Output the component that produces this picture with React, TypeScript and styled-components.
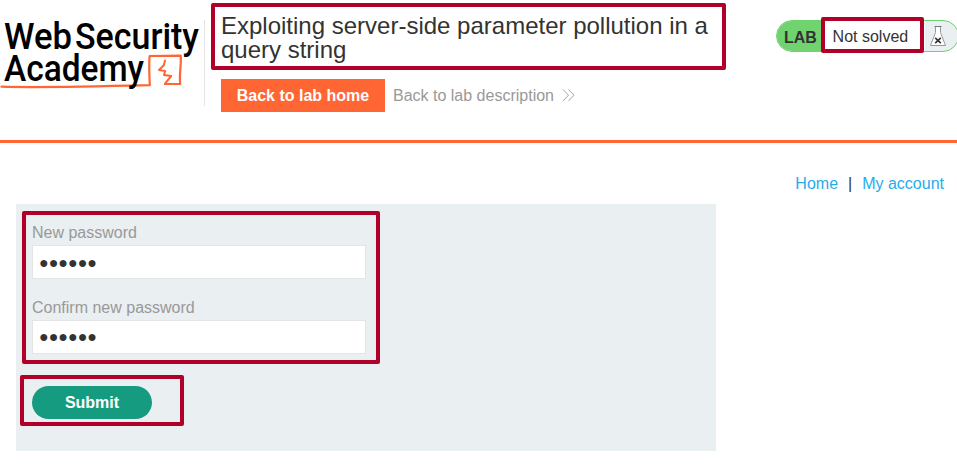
import React from "react";
import styled, { createGlobalStyle } from "styled-components";

const GlobalStyle = createGlobalStyle`
  * { box-sizing: border-box; }
  html, body { margin: 0; padding: 0; background: #fff; overflow: hidden; }
  body { font-family: "Liberation Sans", Arial, sans-serif; font-size: 16px; color: #333332; }
`;

const Page = styled.div`
  width: 957px;
  height: 465px;
  overflow: hidden;
`;

const Header = styled.header`
  display: flex;
  align-items: flex-start;
  height: 143px;
  border-bottom: 3px solid #ff6633;
`;

const Brand = styled.div`
  width: 205px;
  height: 86px;
  margin-top: 20px;
  border-right: 1px solid #e4e4e4;
  flex: none;
`;

const LogoSvg = styled.svg`
  display: block;
  width: 204px;
  height: 86px;
  overflow: visible;
`;

const TitleColumn = styled.div`
  width: 510px;
  margin-left: 16px;
  padding-top: 14px;
  flex: none;
`;

const TitleWrap = styled.div`
  position: relative;
`;

const Title = styled.h2`
  margin: 0;
  font-size: 24px;
  line-height: 24px;
  font-weight: 400;
`;

const Actions = styled.div`
  display: flex;
  align-items: center;
  margin-top: 17px;
`;

const HomeButton = styled.a`
  width: 164px;
  height: 33px;
  line-height: 33px;
  background: #ff6633;
  color: #fff;
  font-weight: 700;
  text-align: center;
`;

const DescriptionLink = styled.a`
  display: flex;
  align-items: center;
  gap: 8px;
  margin-left: 8px;
  color: #999;
  white-space: nowrap;
`;

const StatusPill = styled.div`
  position: relative;
  display: flex;
  width: 183px;
  height: 32px;
  margin: 20px 0 0 45px;
  border-radius: 16px;
  border: 1px solid #70d36f;
  background: #eaeff2;
  flex: none;
`;

const StatusTag = styled.span`
  width: 45px;
  padding-left: 7px;
  line-height: 33px;
  background: #70d36f;
  border-radius: 15px 0 0 15px;
  font-weight: 700;
`;

const StatusText = styled.span`
  width: 103px;
  padding-left: 10.6px;
  line-height: 31px;
  background: #fff;
`;

const FlaskIcon = styled.svg`
  width: 18px;
  height: 22px;
  margin: 4px 0 0 4px;
`;

const Nav = styled.nav`
  display: flex;
  justify-content: flex-end;
  height: 61px;
  padding: 32px 13px 0 0;
  line-height: 18px;
`;

const NavLink = styled.a`
  color: #29abe9;
`;

const NavSeparator = styled.span`
  margin: 0 10px;
`;

const FormPanel = styled.form`
  width: 700px;
  height: 247px;
  margin-left: 16px;
  padding: 19px 16px;
  background: #eaeff2;
`;

const FieldGroup = styled.div`
  position: relative;
  width: 334px;
  height: 163px;
`;

const Field = styled.label`
  display: block;
  height: 75px;
  color: #999;
`;

const FieldLabel = styled.span`
  display: block;
  height: 22px;
  line-height: 19px;
`;

const PasswordInput = styled.input<{ $drop: number }>`
  display: block;
  width: 334px;
  height: 34px;
  padding: ${(p) => p.$drop}px 6px 0;
  border: 1px solid #e4e4e4;
  border-radius: 0;
  outline: none;
  background: #fff;
  color: #333332;
  font: 16px "Liberation Sans", Arial, sans-serif;
`;

const SubmitWrap = styled.div`
  position: relative;
  width: 120px;
`;

const SubmitButton = styled.button`
  display: block;
  width: 120px;
  height: 33px;
  padding: 0;
  border: 0;
  border-radius: 17px;
  background: #159c80;
  color: #fff;
  font: 700 16px "Liberation Sans", Arial, sans-serif;
`;

const Highlight = styled.div<{ $x: number; $y: number; $w: number; $h: number }>`
  position: absolute;
  left: ${(p) => p.$x}px;
  top: ${(p) => p.$y}px;
  width: ${(p) => p.$w}px;
  height: ${(p) => p.$h}px;
  border: 4px solid #b00029;
  border-radius: 2px;
  pointer-events: none;
`;

function Logo() {
  const word = {
    fontFamily: "Roboto",
    fontSize: 37.5,
    fontWeight: 500,
    lengthAdjust: "spacingAndGlyphs",
    fill: "#000",
  };
  return (
    <LogoSvg viewBox="0 20 204 86" aria-label="Web Security Academy">
      <text x="4" y="48.5" textLength="68" {...word}>Web</text>
      <text x="75" y="48.5" textLength="124" {...word}>Security</text>
      <g fill="none" stroke="#ff6633" strokeLinejoin="round" strokeLinecap="round">
        <path
          d="M1.5 86.7C20 87.4 75 87 149.8 85.2C149.3 75 148.8 66 149.6 56L180.7 55.6C181.6 65 179 73 180.2 83.8L165 84"
          strokeWidth="2.2"
        />
        <path d="M165 60.5L163.8 65.2L159 70L165.2 71L164 75L171.2 76L165 83.7" strokeWidth="2" />
      </g>
      <text x="4" y="81" textLength="140" {...word}>Academy</text>
    </LogoSvg>
  );
}

export default function App() {
  return (
    <>
      <GlobalStyle />
      <Page>
        <Header>
          <Brand><Logo /></Brand>
          <TitleColumn>
            <TitleWrap>
              <Title>Exploiting server-side parameter pollution in a query string</Title>
              <Highlight $x={-10} $y={-11} $w={515} $h={67} />
            </TitleWrap>
            <Actions>
              <HomeButton>Back to lab home</HomeButton>
              <DescriptionLink>
                Back to lab description
                <svg width="14" height="14" viewBox="0 0 14 14" fill="none" stroke="#999" strokeWidth="0.9">
                  <path d="M1 0.5L6.5 6.2L1 12M6.5 0.5L12 6.2L6.5 12" />
                </svg>
              </DescriptionLink>
            </Actions>
          </TitleColumn>
          <StatusPill>
            <StatusTag>LAB</StatusTag>
            <StatusText>Not solved</StatusText>
            <FlaskIcon viewBox="0 0 18 22">
              <path d="M6.5 1.5V7.5L1.5 20.5H16.5L11.5 7.5V1.5" fill="#fff" stroke="#999" />
              <path d="M5.5 1.5H12.5" stroke="#777" />
              <path d="M6.2 12.8L11.8 18.2M11.8 12.8L6.2 18.2" stroke="#333" strokeWidth="1.6" />
            </FlaskIcon>
            <Highlight $x={44} $y={-4} $w={103} $h={36} />
          </StatusPill>
        </Header>
        <Nav>
          <NavLink>Home</NavLink>
          <NavSeparator>|</NavSeparator>
          <NavLink>My account</NavLink>
        </Nav>
        <FormPanel>
          <FieldGroup>
            <Field>
              <FieldLabel>New password</FieldLabel>
              <PasswordInput type="text" defaultValue="●●●●●●" $drop={2} />
            </Field>
            <Field>
              <FieldLabel>Confirm new password</FieldLabel>
              <PasswordInput type="text" defaultValue="●●●●●●" $drop={0} />
            </Field>
            <Highlight $x={-10} $y={-12} $w={358} $h={153} />
          </FieldGroup>
          <SubmitWrap>
            <SubmitButton type="button">Submit</SubmitButton>
            <Highlight $x={-12} $y={-11} $w={164} $h={51} />
          </SubmitWrap>
        </FormPanel>
      </Page>
    </>
  );
}
